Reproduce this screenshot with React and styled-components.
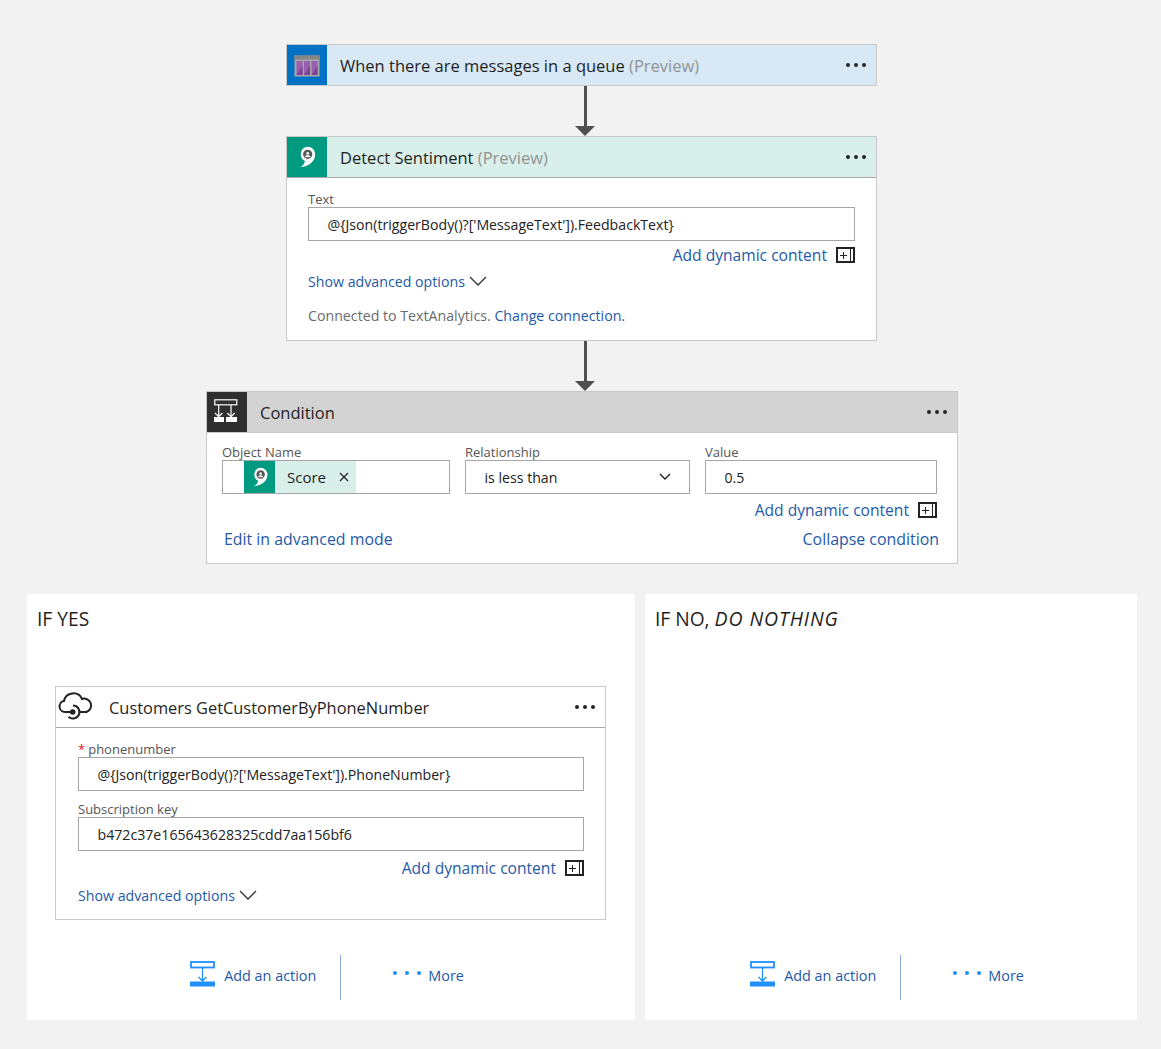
import React from "react";
import styled, { createGlobalStyle } from "styled-components";

const GlobalStyle = createGlobalStyle`
  html, body { margin: 0; padding: 0; }
  body {
    background: #f2f2f2;
    font-family: "Open Sans", "Liberation Sans", sans-serif;
    color: #1f1f1f;
  }
  * { box-sizing: border-box; }
`;

const Page = styled.div`
  width: 1161px;
  height: 1049px;
  padding-top: 44px;
  display: flex;
  flex-direction: column;
  align-items: flex-start;
`;

const Card = styled.div`
  width: ${(p) => p.$w}px;
  margin-left: ${(p) => p.$x}px;
  background: #fff;
  border: 1px solid #c8c8c8;
`;

const Head = styled.div`
  height: 42px;
  margin: -1px -1px ${(p) => (p.$solo ? "-1px" : "0")};
  display: flex;
  align-items: center;
  background: ${(p) => p.$bg};
  border: 1px solid #c8c8c8;
  border-bottom-color: ${(p) => p.$line || "#c8c8c8"};
`;

const IconBox = styled.div`
  width: 40px;
  height: 40px;
  background: ${(p) => p.$bg};
  display: flex;
  align-items: center;
  justify-content: center;
  flex: none;
`;

const Title = styled.div`
  margin-left: 13px;
  padding-top: 1px;
  font-size: 16.5px;
  flex: 1;
`;

const Muted = styled.span`
  color: #8f9393;
`;

const Dots = styled.div`
  display: flex;
  gap: 4px;
  margin-right: 10px;
  span {
    width: 4px;
    height: 4px;
    border-radius: 50%;
    background: #252525;
  }
`;

const Arrow = styled.div`
  height: 50px;
  width: 20px;
  margin-left: 575px;
  display: flex;
  flex-direction: column;
  align-items: center;
  i {
    width: 3px;
    flex: 1;
    background: #505050;
  }
  b {
    width: 0;
    height: 0;
    border-left: 10px solid transparent;
    border-right: 10px solid transparent;
    border-top: 10px solid #505050;
  }
`;

const Body = styled.div`
  padding: ${(p) => p.$pad};
`;

const Label = styled.div`
  font-size: 13px;
  height: 14px;
  line-height: 12px;
  color: #555;
  margin-top: ${(p) => p.$top || 0}px;
`;

const Star = styled.span`
  color: #e81123;
  margin-right: 3px;
`;

const Input = styled.div`
  height: 34px;
  border: 1px solid #a6a6a6;
  padding-left: ${(p) => (p.$token ? 21 : 18.5)}px;
  font-size: 14.15px;
  display: flex;
  align-items: center;
  background: #fff;
  color: #222;
`;

const SelectValue = styled.span`
  flex: 1;
`;

const SelectChevron = styled.svg`
  margin-right: 18px;
`;

const DynRow = styled.div`
  display: flex;
  justify-content: flex-end;
  align-items: center;
  gap: 9px;
  height: 24px;
  margin-top: ${(p) => p.$top}px;
`;

const LinkText = styled.span`
  color: #2459a9;
  font-size: ${(p) => p.$size || 15.6}px;
`;

const PlusBox = styled.span`
  position: relative;
  width: 19px;
  height: 16px;
  border: 2px solid #222;
  background: #fff;
  &::before {
    content: "";
    position: absolute;
    left: 2px;
    top: 6px;
    width: 7px;
    height: 1px;
    background: #222;
  }
  &::after {
    content: "";
    position: absolute;
    left: 5px;
    top: 3px;
    width: 1px;
    height: 7px;
    background: #222;
  }
`;

const PlusLine = styled.i`
  position: absolute;
  right: 2px;
  top: 0;
  width: 1px;
  height: 12px;
  background: #222;
`;

const Advanced = styled.div`
  display: flex;
  align-items: center;
  gap: 4px;
  margin-top: ${(p) => p.$top}px;
`;

const Connected = styled.div`
  margin-top: 15px;
  font-size: 14.2px;
  color: #6b6b6b;
`;

const ConditionRow = styled.div`
  display: grid;
  grid-template-columns: 228px 225px 232px;
  gap: 15px;
`;

const Token = styled.div`
  display: flex;
  align-items: center;
  height: 32px;
  width: 112px;
  background: #d9efe9;
  font-size: 15px;
`;

const TokenIcon = styled.div`
  width: 31px;
  height: 32px;
  background: #009a80;
  display: flex;
  align-items: center;
  justify-content: center;
`;

const TokenText = styled.span`
  margin-left: 12px;
  flex: 1;
`;

const TokenClose = styled.svg`
  margin-right: 7px;
`;

const FootRow = styled.div`
  display: flex;
  justify-content: space-between;
  margin: 4px -2px 0 2px;
  height: 26px;
  align-items: center;
`;

const Branches = styled.div`
  display: flex;
  gap: 10px;
  width: 1161px;
  padding: 30px 24px 0 27px;
`;

const Branch = styled.div`
  width: ${(p) => p.$w}px;
  height: 426px;
  background: #fff;
  display: flex;
  flex-direction: column;
`;

const BranchTitle = styled.div`
  padding: 12px 10px 0;
  font-size: 19.2px;
  line-height: 25px;
  height: 92px;
  em {
    font-size: 19.500px;
    letter-spacing: 0.9px;
  }
`;

const ActionCard = styled.div`
  margin: 0 29px 0 28px;
  height: 234px;
  border: 1px solid #c8c8c8;
`;

const ActionHead = styled.div`
  height: 41px;
  display: flex;
  align-items: center;
  border-bottom: 1px solid #a9a9a9;
  padding-left: 2px;
`;

const ActionTitle = styled.div`
  margin-left: 13px;
  font-size: 16.4px;
  flex: 1;
`;

const Actions = styled.div`
  margin-top: auto;
  margin-bottom: 20px;
  padding-right: 8px;
  display: flex;
  justify-content: center;
  align-items: center;
  height: 45px;
`;

const ActionBtn = styled.div`
  display: flex;
  align-items: center;
  gap: ${(p) => p.$gap}px;
  margin-top: -4px;
  font-size: 14.4px;
  color: #2459a9;
`;

const ActionIconWrap = styled.div`
  display: flex;
  margin-top: -3px;
`;

const Divider = styled.div`
  width: 1px;
  height: 45px;
  background: #8ba9ea;
  margin: 0 52px 0 24px;
`;

const BlueDots = styled.div`
  display: flex;
  gap: 8px;
  margin-top: -5px;
  span {
    width: 4px;
    height: 4px;
    border-radius: 50%;
    background: #1e90ff;
  }
`;

const More = () => (
  <Dots>
    <span />
    <span />
    <span />
  </Dots>
);

const Chevron = () => (
  <svg width="18" height="11" viewBox="0 0 18 11">
    <path d="M1 1l8 8 8-8" fill="none" stroke="#333" strokeWidth="1.3" />
  </svg>
);

const SentimentIcon = ({ size = 22 }) => (
  <svg width={size} height={size} viewBox="0 0 22 22">
    <path d="M11.700.800a7.500 7.500 0 0 1 7.500 7.500c0 7-6.500 12.700-15 12.700 2-1 4-2.500 4.800-6A7.500 7.500 0 0 1 11.700.800z" fill="#fff" />
    <circle cx="11.700" cy="8.300" r="4.600" fill="#555" />
    <circle cx="11.700" cy="7.300" r="1.500" fill="#e8e8e8" />
    <path d="M8.700 11.300c.5-1.600 1.500-2.200 3-2.200s2.500.6 3 2.200z" fill="#e8e8e8" />
  </svg>
);

const QueueIcon = () => (
  <svg width="26" height="24" viewBox="0 -2 26 24">
    <rect x="0.500" y="0.500" width="25" height="21" fill="#a7a7a7" />
    <rect x="0.500" y="0.500" width="25" height="4" fill="#858585" />
    <rect x="2.500" y="6" width="6" height="14" fill="#9a5fb0" />
    <rect x="10" y="6" width="6" height="14" fill="#9a5fb0" />
    <rect x="17.500" y="6" width="6" height="14" fill="#9a5fb0" />
    <path d="M2.500 20L8.500 11v9zM10 20l6-9v9zM17.500 20l6-9v9z" fill="#7d4296" />
  </svg>
);

const ConditionIcon = () => (
  <svg width="26" height="26" viewBox="0 0 26 26" fill="none" stroke="#fff" strokeWidth="1.200">
    <rect x="0.800" y="0.800" width="22" height="5" />
    <rect x="0" y="18" width="10" height="5" fill="#fff" stroke="none" />
    <rect x="12" y="18" width="11" height="5" fill="#fff" stroke="none" />
    <path d="M4.700 6v12M1 14l3.700 3.700L8.400 14M17 6v12M13.300 14l3.700 3.700 3.700-3.700" />
  </svg>
);

const CloudIcon = () => (
  <svg width="38" height="32" viewBox="0 0 38 32" fill="none" stroke="#222" strokeWidth="2">
    <path d="M10 21H7a5.500 5.500 0 0 1-1-10.900A9.500 9.500 0 0 1 24 8a6.500 6.500 0 0 1 4.500 13H21" />
    <path d="M15 14.500A6.500 6.500 0 1 1 10.500 25.700" />
    <circle cx="14.700" cy="21" r="2.800" fill="#222" stroke="none" />
    <path d="M9 21h6" />
  </svg>
);

const AddActionIcon = () => (
  <svg width="25" height="26" viewBox="0 0 25 26" fill="none" stroke="#1e90ff" strokeWidth="1.300">
    <rect x="1" y="1" width="23" height="5.500" strokeWidth="1.800" />
    <path d="M12.500 6.500V20M8.500 16l4 4 4-4" />
    <rect x="0" y="20.500" width="25" height="5" fill="#1e90ff" stroke="none" />
  </svg>
);

const DynamicContent = ({ top }) => (
  <DynRow $top={top}>
    <LinkText>Add dynamic content</LinkText>
    <PlusBox>
      <PlusLine />
    </PlusBox>
  </DynRow>
);

const BranchActions = () => (
  <Actions>
    <ActionBtn $gap={9}>
      <ActionIconWrap>
        <AddActionIcon />
      </ActionIconWrap>
      Add an action
    </ActionBtn>
    <Divider />
    <ActionBtn $gap={7}>
      <BlueDots>
        <span />
        <span />
        <span />
      </BlueDots>
      More
    </ActionBtn>
  </Actions>
);

export default function App() {
  return (
    <Page>
      <GlobalStyle />
      <Card $w={591} $x={286}>
        <Head $solo $bg="#d8e8f4">
          <IconBox $bg="#0072c6">
            <QueueIcon />
          </IconBox>
          <Title>
            When there are messages in a queue <Muted>(Preview)</Muted>
          </Title>
          <More />
        </Head>
      </Card>
      <Arrow>
        <i />
        <b />
      </Arrow>
      <Card $w={591} $x={286}>
        <Head $bg="#d9efe9" $line="#a9a9a9">
          <IconBox $bg="#009a80">
            <SentimentIcon />
          </IconBox>
          <Title>
            Detect Sentiment <Muted>(Preview)</Muted>
          </Title>
          <More />
        </Head>
        <Body $pad="15px 21px 15px">
          <Label>Text</Label>
          <Input>@{"{"}Json(triggerBody()?['MessageText']).FeedbackText{"}"}</Input>
          <DynamicContent top={2} />
          <Advanced $top={5}>
            <LinkText $size={14.2}>Show advanced options</LinkText>
            <Chevron />
          </Advanced>
          <Connected>
            Connected to TextAnalytics. <LinkText $size={14.2}>Change connection.</LinkText>
          </Connected>
        </Body>
      </Card>
      <Arrow>
        <i />
        <b />
      </Arrow>
      <Card $w={752} $x={206}>
        <Head $bg="#d3d3d3">
          <IconBox $bg="#2f2f2f">
            <ConditionIcon />
          </IconBox>
          <Title>Condition</Title>
          <More />
        </Head>
        <Body $pad="13px 20px 11px 15px">
          <ConditionRow>
            <div>
              <Label>Object Name</Label>
              <Input $token>
                <Token>
                  <TokenIcon>
                    <SentimentIcon size={20} />
                  </TokenIcon>
                  <TokenText>Score</TokenText>
                  <TokenClose width="10" height="10" viewBox="0 0 10 10">
                    <path d="M1 1l8 8M9 1l-8 8" stroke="#222" strokeWidth="1.200" />
                  </TokenClose>
                </Token>
              </Input>
            </div>
            <div>
              <Label>Relationship</Label>
              <Input>
                <SelectValue>is less than</SelectValue>
                <SelectChevron width="12" height="8" viewBox="0 0 12 8">
                  <path d="M1 1l5 5 5-5" fill="none" stroke="#222" strokeWidth="1.400" />
                </SelectChevron>
              </Input>
            </div>
            <div>
              <Label>Value</Label>
              <Input>0.5</Input>
            </div>
          </ConditionRow>
          <DynamicContent top={4} />
          <FootRow>
            <LinkText $size={15.9}>Edit in advanced mode</LinkText>
            <LinkText $size={15.9}>Collapse condition</LinkText>
          </FootRow>
        </Body>
      </Card>
      <Branches>
        <Branch $w={608}>
          <BranchTitle>IF YES</BranchTitle>
          <ActionCard>
            <ActionHead>
              <CloudIcon />
              <ActionTitle>Customers GetCustomerByPhoneNumber</ActionTitle>
              <More />
            </ActionHead>
            <Body $pad="15px 21px 0 22px">
              <Label>
                <Star>*</Star>phonenumber
              </Label>
              <Input>@{"{"}Json(triggerBody()?['MessageText']).PhoneNumber{"}"}</Input>
              <Label $top={12}>Subscription key</Label>
              <Input>b472c37e165643628325cdd7aa156bf6</Input>
              <DynamicContent top={5} />
              <Advanced $top={6}>
                <LinkText $size={14.2}>Show advanced options</LinkText>
                <Chevron />
              </Advanced>
            </Body>
          </ActionCard>
          <BranchActions />
        </Branch>
        <Branch $w={492}>
          <BranchTitle>
            IF NO, <em>DO NOTHING</em>
          </BranchTitle>
          <BranchActions />
        </Branch>
      </Branches>
    </Page>
  );
}
